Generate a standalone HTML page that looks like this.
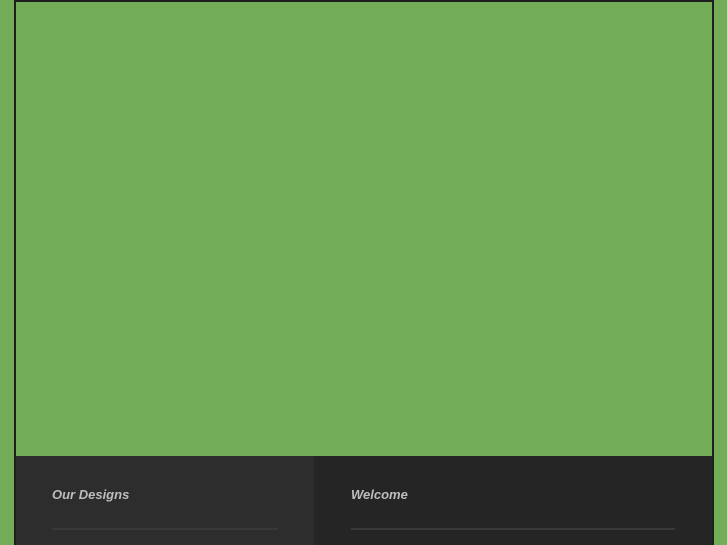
<!DOCTYPE html>
<html><head><style>
html,body{margin:0;padding:0;width:727px;height:545px;overflow:hidden;background:#73ad58;font-family:"Liberation Sans",sans-serif}
.wrap{position:relative;width:727px;height:545px;overflow:hidden}
.box{position:absolute;left:14px;top:0;width:696px;height:543px;border:2px solid #1e1e1e;border-bottom:none;background:#73ad58;overflow:hidden}
.l{position:absolute;left:0;top:454px;width:298px;height:89px;background:#2d2d2d}
.r{position:absolute;left:298px;top:454px;width:398px;height:89px;background:#252525}
h3{position:absolute;top:31px;margin:0;font-size:13px;font-style:italic;font-weight:bold;color:#bdbdbd;letter-spacing:0}
.hr{position:absolute;top:72px;height:2px;background:#393939}
</style></head><body>
<div class="wrap">
<div class="box">
<div class="l"><h3 style="left:36px">Our Designs</h3><div class="hr" style="left:36px;width:226px"></div></div>
<div class="r"><h3 style="left:37px">Welcome</h3><div class="hr" style="left:37px;width:324px"></div></div>
</div>
</div>
</body></html>
